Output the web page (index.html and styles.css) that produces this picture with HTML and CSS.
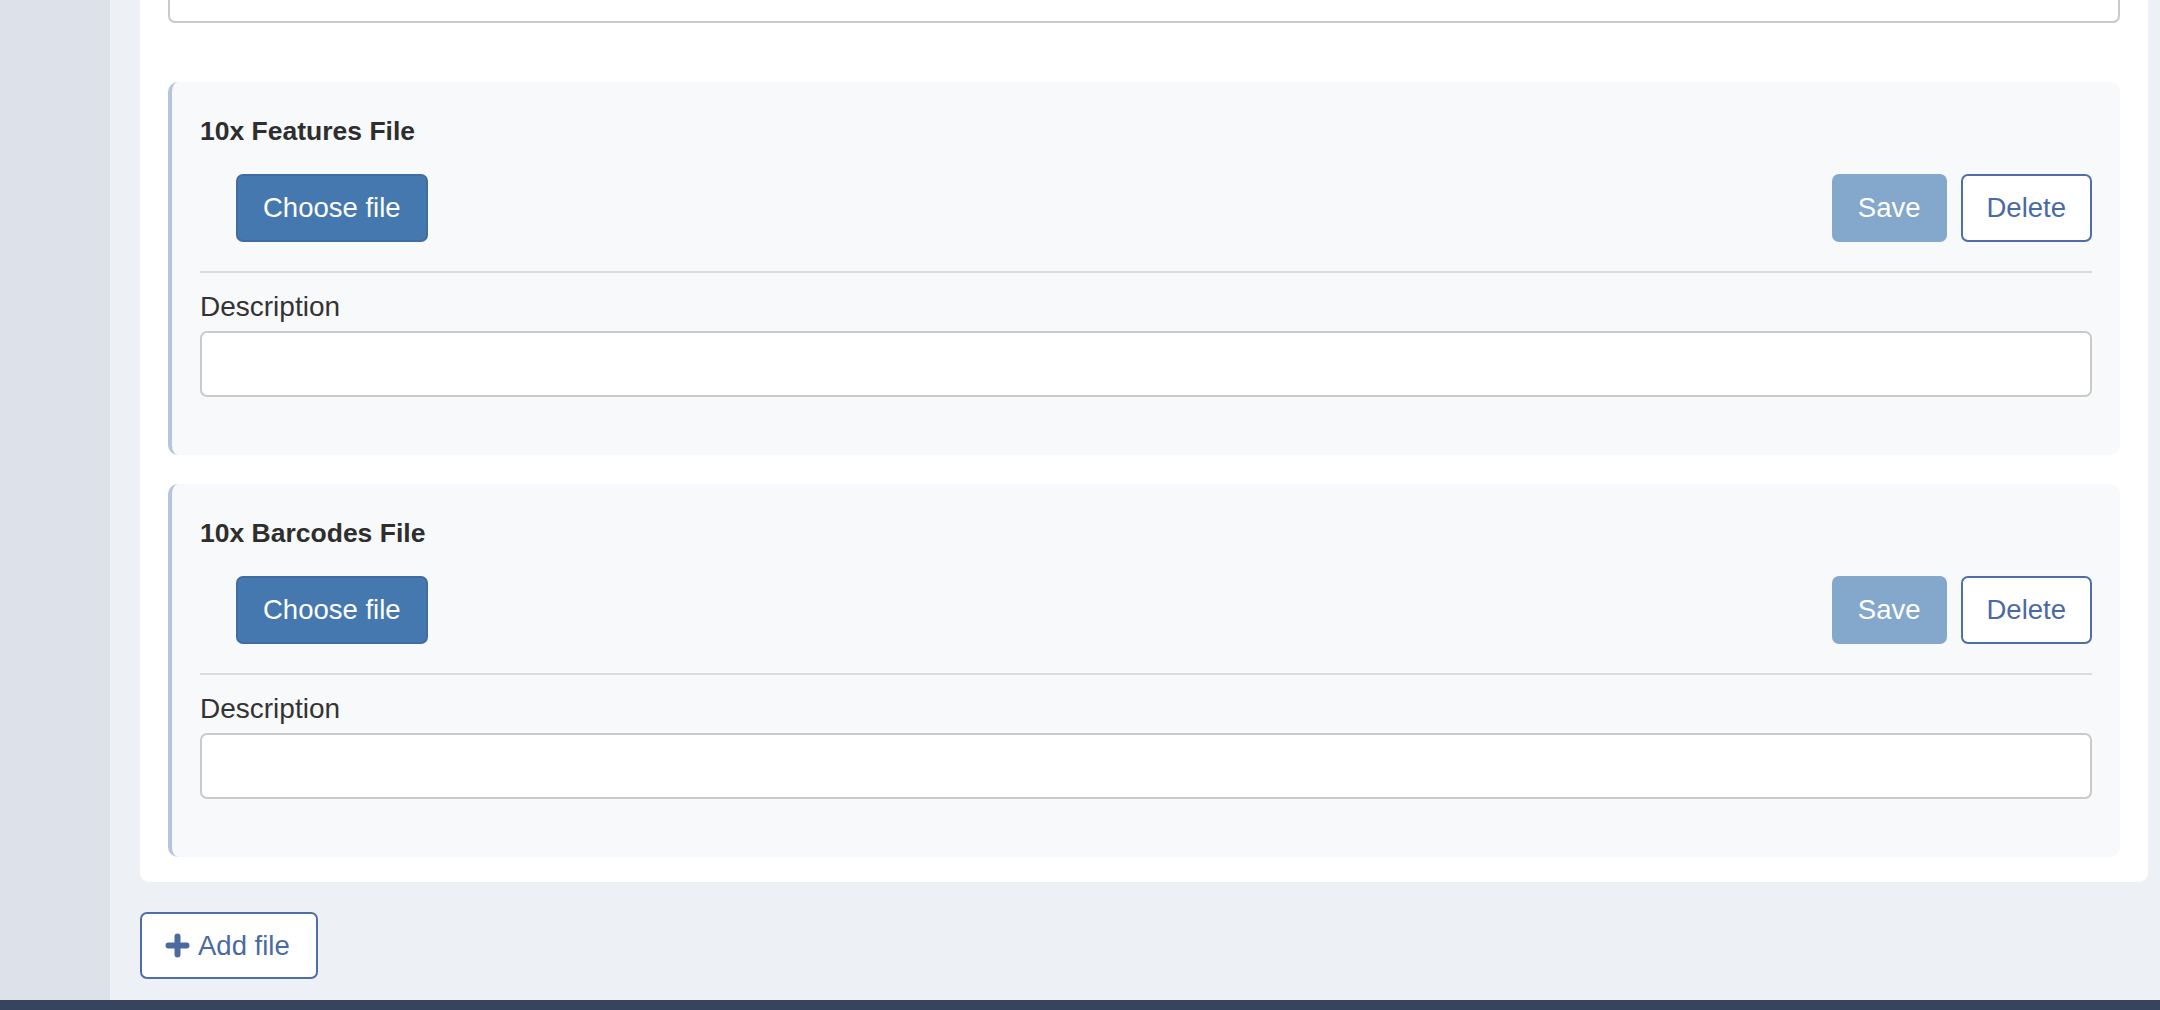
FILE: index.html
```html
<!DOCTYPE html>
<html lang="en">
<head>
    <meta charset="UTF-8">
    <meta name="viewport" content="width=device-width, initial-scale=1.0">
    <title>Files</title>
    <link rel="stylesheet" href="styles.css">
</head>
<body>
    <div class="layout">
        <aside class="sidebar"></aside>

        <main class="main">
            <section class="panel">
                <input class="text-input top-input" type="text">

                <div class="file-card">
                    <h3 class="file-title">10x Features File</h3>
                    <div class="file-row">
                        <label class="btn btn-primary choose-btn">Choose file<input type="file" hidden></label>
                        <div class="file-actions">
                            <button class="btn btn-save" disabled>Save</button>
                            <button class="btn btn-outline">Delete</button>
                        </div>
                    </div>
                    <hr class="divider">
                    <label class="field-label">Description</label>
                    <input class="text-input" type="text">
                </div>

                <div class="file-card">
                    <h3 class="file-title">10x Barcodes File</h3>
                    <div class="file-row">
                        <label class="btn btn-primary choose-btn">Choose file<input type="file" hidden></label>
                        <div class="file-actions">
                            <button class="btn btn-save" disabled>Save</button>
                            <button class="btn btn-outline">Delete</button>
                        </div>
                    </div>
                    <hr class="divider">
                    <label class="field-label">Description</label>
                    <input class="text-input" type="text">
                </div>
            </section>

            <button class="btn btn-outline add-btn">
                <svg class="plus-icon" viewBox="0 0 25 25" width="25" height="25">
                    <path d="M12.5 3.5V21.5M3.5 12.5H21.5" stroke="currentColor" stroke-width="6" stroke-linecap="round" fill="none"/>
                </svg>
                Add file
            </button>
        </main>
    </div>

    <footer class="bottom-bar"></footer>
</body>
</html>
```

FILE: styles.css
```css
body {
    margin: 0;
    height: 1010px;
    overflow: hidden;
    font-family: 'Liberation Sans', Arial, Helvetica, sans-serif;
    color: #333;
    background-color: #edf0f4;
}

.layout {
    display: flex;
    height: 1000px;
}

.sidebar {
    width: 110px;
    flex-shrink: 0;
    background-color: #dde1e9;
}

.main {
    flex: 1;
    padding: 0 12px 0 30px;
    background-color: #edf0f4;
}

.panel {
    margin-top: -40px;
    padding: 0 28px 25px;
    background: white;
    border-radius: 0 0 9px 9px;
}

.text-input {
    display: block;
    box-sizing: border-box;
    width: 100%;
    height: 66px;
    border: 2px solid #cacaca;
    border-radius: 7px;
    background: white;
    font-size: 27px;
    font-family: inherit;
    padding: 0 16px;
}

.text-input:focus {
    outline: none;
    border-color: #4678b0;
}

.top-input {
    height: 63px;
}

.file-card {
    margin-top: 29px;
    padding: 35px 28px 58px;
    background-color: #f8f9fb;
    border-left: 4px solid #b7c4de;
    border-radius: 10px;
}

.top-input + .file-card {
    margin-top: 59px;
}

.file-title {
    margin: 0;
    font-size: 26.5px;
    line-height: 28px;
    font-weight: bold;
    color: #2e2e2e;
}

.file-row {
    display: flex;
    align-items: center;
    margin-top: 29px;
}

.choose-btn {
    margin-left: 36px;
}

.file-actions {
    display: flex;
    gap: 14px;
    margin-left: auto;
}

.btn {
    box-sizing: border-box;
    display: inline-flex;
    align-items: center;
    height: 68px;
    padding: 0 25px;
    border: 2px solid transparent;
    border-radius: 7px;
    font-family: inherit;
    font-size: 27.5px;
    cursor: pointer;
}

.btn-primary {
    background-color: #4678b0;
    border-color: #3f6ca1;
    color: white;
}

.btn-save {
    background-color: #84a8cb;
    border-color: #84a8cb;
    color: white;
    padding: 0 24px;
}

.btn-save:disabled {
    cursor: not-allowed;
}

.btn-outline {
    background: white;
    border-color: #4e6fa6;
    color: #4a6aa2;
    padding: 0 24px;
}

.divider {
    margin: 29px 0 0;
    border: none;
    border-top: 2px solid #dcdde1;
}

.field-label {
    display: block;
    margin-top: 18px;
    font-size: 28px;
    line-height: 32px;
    color: #333;
}

.file-card .text-input {
    margin-top: 8px;
}

.add-btn {
    margin-top: 30px;
    height: 67px;
    padding: 0 26px 0 23px;
}

.plus-icon {
    margin-right: 8px;
}

.bottom-bar {
    height: 10px;
    background-color: #37445e;
    box-shadow: 0 -3px 8px rgba(0,0,0,0.06);
}
```
